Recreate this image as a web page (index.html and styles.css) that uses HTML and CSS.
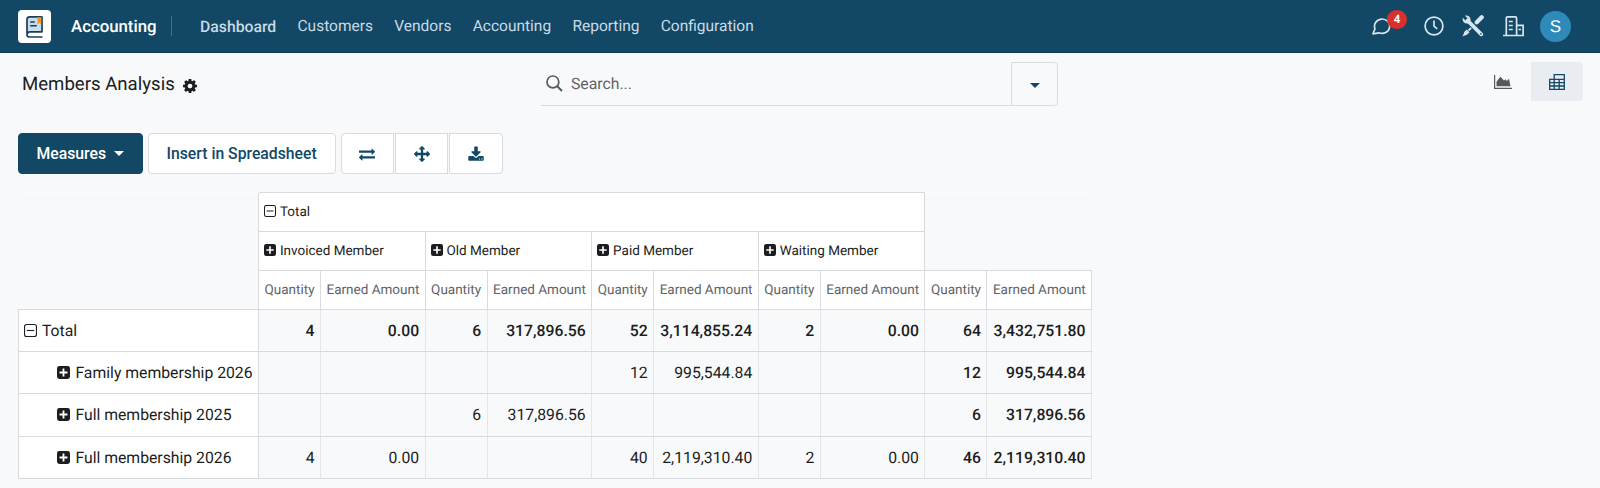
FILE: index.html
```
<!DOCTYPE html>
<html lang="en">
<head>
  <meta charset="UTF-8" />
  <meta name="viewport" content="width=device-width, initial-scale=1" />
  <title>Members Analysis</title>
  <link rel="stylesheet" href="styles.css">
</head>
<body>
  <!-- Shared icons -->
  <svg class="icon-defs" width="0" height="0">
    <symbol id="plus" viewBox="0 0 13 13">
      <rect width="13" height="13" rx="2.4" fill="#1b1d21"/>
      <path d="M6.5 2.5v8M2.5 6.5h8" stroke="#fff" stroke-width="1.8"/>
    </symbol>
    <symbol id="minus" viewBox="0 0 13 13">
      <rect x=".55" y=".55" width="11.9" height="11.9" rx="2" fill="none" stroke="#1b1d21" stroke-width="1.1"/>
      <path d="M2.8 6.5h7.4" stroke="#1b1d21" stroke-width="1.1"/>
    </symbol>
  </svg>

  <!-- Main navbar -->
  <nav class="navbar">
    <div class="app-logo">
      <svg width="17" height="22" viewBox="0 0 17 22">
        <path d="M3 1h13v15H1V3q0-2 2-2z" fill="#c9dcec"/>
        <path d="M16.500 .9H3.600Q1 .9 1 3.500V18.500q0 2.500 2.600 2.500H16.500M1.500 17.500q.5-1.600 2.500-1.600h12.500M16 1v15" fill="none" stroke="#183f5a" stroke-width="1.700"/>
        <path d="M4.200 6h4.600M4.200 9.800h6.600" stroke="#183f5a" stroke-width="1.500"/>
        <path d="M11.500 1.200h3.800v7.300l-1.900-1.700-1.900 1.700z" fill="#f09a1c"/>
      </svg>
    </div>
    <span class="brand">Accounting</span>
    <div class="nav-menu">
      <a class="current">Dashboard</a>
      <a>Customers</a>
      <a>Vendors</a>
      <a>Accounting</a>
      <a>Reporting</a>
      <a>Configuration</a>
    </div>
    <div class="systray">
      <div class="chat">
        <svg width="20" height="18" viewBox="0 0 20 18" fill="none" stroke="#d7e5ee" stroke-width="1.700" stroke-linejoin="round">
          <path d="M1 16.800 3 11.800A7.600 7.200 0 1 1 7 15.800z"/>
        </svg>
        <span class="badge">4</span>
      </div>
      <svg class="clock" width="20" height="20" viewBox="0 0 20 20" fill="none" stroke="#d7e5ee" stroke-width="1.700">
        <circle cx="10" cy="10" r="8.900"/>
        <path d="M10 4.500V10.200l3.200 2.700"/>
      </svg>
      <svg class="tools" width="22" height="22" viewBox="0 0 22 22" fill="#d7e5ee">
        <path d="M6.500 15.500 13 9" stroke="#d7e5ee" stroke-width="1.800"/>
        <path d="M14.800 7.200 19.700 2.300" stroke="#d7e5ee" stroke-width="4.200" stroke-linecap="round"/>
        <path d="M4.700 14.500 7.500 17.300 5.300 19.500.6 21.500 2.400 16.700z"/>
        <path d="M6 6 19.300 19.300" stroke="#124865" stroke-width="5.600"/>
        <path d="M5.500 5.500 19.300 19.300" stroke="#d7e5ee" stroke-width="3.800" stroke-linecap="round"/>
        <path d="M3 .7 5.600 3.300 5.200 5 3.500 5.400.8 2.800C-.1 6.500 2.800 9.300 6.500 8.200L8.500 6.200C9.300 2.800 6.500-.1 3 .7z"/>
        <circle cx="18.900" cy="18.900" r=".8" fill="#124865"/>
      </svg>
      <svg class="company" width="21" height="21" viewBox="0 0 21 21" fill="none" stroke="#d7e5ee" stroke-width="1.700">
        <path d="M0 19.500h20.100V9.300h-6.500M3.300 19.500V2.200q0-1.300 1.300-1.300h7.700q1.300 0 1.300 1.300V19.500M5.800 5.500h4M5.800 9.500h4M5.800 13.500h4M15.500 13.500h2.500"/>
      </svg>
      <span class="avatar">S</span>
    </div>
  </nav>

  <!-- Control panel -->
  <div class="control-panel">
    <div class="title">
      <span>Members Analysis</span>
      <svg class="cog" width="14" height="14" viewBox="0 128 1536 1536"><path fill="#1b1d21" d="M1024 896q0-106-75-181t-181-75-181 75-75 181 75 181 181 75 181-75 75-181zm512-109v222q0 12-8 23t-20 13l-185 28q-19 54-39 91 35 50 107 138 10 12 10 25t-9 23q-27 37-99 108t-94 71q-12 0-26-9l-138-108q-44 23-91 38-16 136-29 186-7 28-36 28h-222q-14 0-24.500-8.500t-11.500-21.500l-28-184q-49-16-90-37l-141 107q-10 9-25 9-14 0-25-11-126-114-165-168-7-10-7-23 0-12 8-23 15-21 51-66.500t54-70.500q-27-50-41-99l-183-27q-13-2-21-12.500t-8-23.500v-222q0-12 8-23t19-13l186-28q14-46 39-92-40-57-107-138-10-12-10-24 0-10 9-23 26-36 98.500-107.500t94.500-71.500q13 0 26 10l138 107q44-23 91-38 16-136 29-186 7-28 36-28h222q14 0 24.500 8.500t11.500 21.500l28 184q49 16 90 37l142-107q9-9 24-9 13 0 25 10 129 119 165 170 7 8 7 22 0 12-8 23-15 21-51 66.500t-54 70.500q26 50 41 98l183 28q13 2 21 12.500t8 23.500z"/></svg>
    </div>
    <div class="search">
      <div class="search-box">
        <svg width="17" height="17" viewBox="0 0 17 17" fill="none" stroke="#55595e" stroke-width="1.700">
          <circle cx="6.900" cy="6.900" r="5.900"/>
          <path d="M11 11l5 5" stroke-width="2"/>
        </svg>
        <span>Search...</span>
      </div>
      <button class="search-toggle"><i class="caret"></i></button>
    </div>
    <div class="view-switch">
      <button>
        <svg width="18" height="14" viewBox="0 0 18 14" fill="#55595e">
          <path d="M.6 0v13.300H18" fill="none" stroke="#55595e" stroke-width="1.200"/>
          <path d="M2.500 11.300V6.800L6.300 1.700 10 5.500l1.500-1.200 1.300 1.700 2.200-2.300 1.500 7.600z"/>
        </svg>
      </button>
      <button class="active">
        <svg width="16" height="16" viewBox="0 0 16 16" fill="none" stroke="#124865" stroke-width="1.300">
          <path d="M5.200 5.300V.7h10.100v14.600H.7V5.300h14.600M.7 8.700h14.600M.7 12h14.600M5.200 5.300v10M10.200 5.300v10"/>
        </svg>
      </button>
    </div>
  </div>

  <!-- Pivot buttons -->
  <div class="toolbar">
    <button class="btn btn-primary">Measures <i class="caret"></i></button>
    <button class="btn">Insert in Spreadsheet</button>
    <div class="btn-group">
      <button class="btn"><svg width="16" height="16" viewBox="0 0 1792 1792"><path d="M1792 1184v192q0 13-9.500 22.500t-22.500 9.500h-1376v192q0 13-9.500 22.500t-22.500 9.500q-12 0-24-10l-319-320q-9-9-9-22 0-14 9-23l320-320q9-9 23-9 13 0 22.500 9.500t9.500 22.500v192h1376q13 0 22.500 9.500t9.500 22.500zm0-544q0 14-9 23l-320 320q-9 9-23 9-13 0-22.500-9.500t-9.500-22.500v-192h-1376q-13 0-22.500-9.500t-9.500-22.500v-192q0-13 9.500-22.500t22.500-9.500h1376v-192q0-13 9.500-22.500t22.500-9.500q12 0 24 10l319 319q9 9 9 23z"/></svg></button>
      <button class="btn"><svg width="16" height="16" viewBox="0 0 1792 1792"><path d="M1792 896q0 26-19 45l-256 256q-19 19-45 19t-45-19-19-45v-128h-384v384h128q26 0 45 19t19 45-19 45l-256 256q-19 19-45 19t-45-19l-256-256q-19-19-19-45t19-45 45-19h128v-384h-384v128q0 26-19 45t-45 19-45-19l-256-256q-19-19-19-45t19-45l256-256q19-19 45-19t45 19 19 45v128h384v-384h-128q-26 0-45-19t-19-45 19-45l256-256q19-19 45-19t45 19l256 256q19 19 19 45t-19 45-45 19h-128v384h384v-128q0-26 19-45t45-19 45 19l256 256q19 19 19 45z"/></svg></button>
      <button class="btn"><svg width="16" height="16" viewBox="32 -60 1728 1728"><path d="M1344 1344q0-26-19-45t-45-19-45 19-19 45 19 45 45 19 45-19 19-45zm256 0q0-26-19-45t-45-19-45 19-19 45 19 45 45 19 45-19 19-45zm128-224v320q0 40-28 68t-68 28h-1472q-40 0-68-28t-28-68v-320q0-40 28-68t68-28h465l135 136q58 56 136 56t136-56l136-136h464q40 0 68 28t28 68zm-325-569q17 41-14 70l-448 448q-18 19-45 19t-45-19l-448-448q-31-29-14-70 17-39 59-39h256v-448q0-26 19-45t45-19h256q26 0 45 19t19 45v448h256q42 0 59 39z"/></svg></button>
    </div>
  </div>

  <!-- Pivot table -->
  <table class="pivot">
    <colgroup>
      <col class="col-label">
      <col class="col-qty"><col class="col-amount">
      <col class="col-qty"><col class="col-amount">
      <col class="col-qty"><col class="col-amount">
      <col class="col-qty"><col class="col-amount">
      <col class="col-qty"><col class="col-amount">
    </colgroup>
    <thead>
      <tr>
        <th class="blank" rowspan="3"></th>
        <th colspan="8"><svg><use href="#minus"/></svg>Total</th>
        <th class="blank" rowspan="2" colspan="2"></th>
      </tr>
      <tr>
        <th colspan="2"><svg><use href="#plus"/></svg>Invoiced Member</th>
        <th colspan="2"><svg><use href="#plus"/></svg>Old Member</th>
        <th colspan="2"><svg><use href="#plus"/></svg>Paid Member</th>
        <th colspan="2"><svg><use href="#plus"/></svg>Waiting Member</th>
      </tr>
      <tr class="measures">
        <th>Quantity</th><th>Earned Amount</th>
        <th>Quantity</th><th>Earned Amount</th>
        <th>Quantity</th><th>Earned Amount</th>
        <th>Quantity</th><th>Earned Amount</th>
        <th>Quantity</th><th>Earned Amount</th>
      </tr>
    </thead>
    <tbody>
      <tr class="total">
        <th><svg><use href="#minus"/></svg>Total</th>
        <td>4</td><td>0.00</td>
        <td>6</td><td>317,896.56</td>
        <td>52</td><td>3,114,855.24</td>
        <td>2</td><td>0.00</td>
        <td>64</td><td>3,432,751.80</td>
      </tr>
      <tr>
        <th class="child"><svg><use href="#plus"/></svg>Family membership 2026</th>
        <td></td><td></td>
        <td></td><td></td>
        <td>12</td><td>995,544.84</td>
        <td></td><td></td>
        <td class="sum">12</td><td class="sum">995,544.84</td>
      </tr>
      <tr>
        <th class="child"><svg><use href="#plus"/></svg>Full membership 2025</th>
        <td></td><td></td>
        <td>6</td><td>317,896.56</td>
        <td></td><td></td>
        <td></td><td></td>
        <td class="sum">6</td><td class="sum">317,896.56</td>
      </tr>
      <tr>
        <th class="child"><svg><use href="#plus"/></svg>Full membership 2026</th>
        <td>4</td><td>0.00</td>
        <td></td><td></td>
        <td>40</td><td>2,119,310.40</td>
        <td>2</td><td>0.00</td>
        <td class="sum">46</td><td class="sum">2,119,310.40</td>
      </tr>
    </tbody>
  </table>
</body>
</html>
```
FILE: styles.css
```
* {
  box-sizing: border-box;
  margin: 0;
  padding: 0;
}

body {
  height: 488px;
  font-family: Roboto, "Liberation Sans", sans-serif;
  font-size: 15.75px;
  color: #1b1d21;
  background-color: #f8f9fb;
  text-rendering: geometricPrecision;
  overflow: hidden;
}

svg {
  display: block;
  flex: none;
}

.icon-defs {
  position: absolute;
}

button {
  font: inherit;
  color: inherit;
  background: none;
  border: none;
}

.caret {
  display: inline-block;
  border-top: 5px solid currentColor;
  border-left: 5px solid transparent;
  border-right: 5px solid transparent;
}

/* Navbar */
.navbar {
  display: flex;
  align-items: center;
  height: 53px;
  padding: 0 29px 0 18px;
  background-color: #124865;
  border-bottom: 1px solid #0d3850;
  color: #c9dae5;
}

.app-logo {
  display: flex;
  align-items: center;
  justify-content: center;
  width: 33px;
  height: 33px;
  margin-top: 1px;
  background: white;
  border-radius: 4px;
}

.brand {
  width: 101px;
  height: 20px;
  margin-left: 20px;
  line-height: 22px;
  font-size: 16.8px;
  font-weight: 500;
  color: white;
  border-right: 1px solid #41708a;
}

.nav-menu {
  display: flex;
  gap: 21.3px;
  margin-left: 28px;
  font-size: 15.5px;
}

.nav-menu .current {
  font-size: 15.75px;
  font-weight: 500;
}

.systray {
  display: flex;
  align-items: center;
  margin-left: auto;
}

.chat {
  position: relative;
}

.badge {
  position: absolute;
  top: -7px;
  left: 15px;
  width: 20px;
  height: 19px;
  line-height: 19px;
  border-radius: 10px;
  background-color: #d9302c;
  color: white;
  font-size: 11.5px;
  font-weight: 700;
  text-align: center;
}

.clock {
  margin-left: 32px;
}

.tools {
  margin-left: 18px;
}

.company {
  margin-left: 19px;
}

.avatar {
  width: 31px;
  height: 31px;
  margin-left: 16px;
  line-height: 32px;
  border-radius: 50%;
  background-color: #2f8ab9;
  color: white;
  font-family: "Liberation Sans", sans-serif;
  font-size: 17px;
  text-align: center;
}

/* Control panel */
.control-panel {
  display: grid;
  grid-template-columns: 519px 517px 1fr;
  align-items: start;
  height: 80px;
  padding: 9px 17px 0 22px;
}

.title {
  display: flex;
  align-items: center;
  height: 43px;
  font-size: 18.6px;
}

.cog {
  margin: 4px 0 0 8px;
}

.search {
  display: flex;
  height: 44px;
}

.search-box {
  display: flex;
  flex: 1;
  align-items: center;
  gap: 8px;
  padding: 0 0 1px 5px;
  border-bottom: 1px solid #d8dadd;
  color: #5f6368;
}

.search-toggle {
  width: 47px;
  border: 1px solid #d8dadd;
  border-radius: 0 4px 4px 0;
  color: #124865;
}

.search-toggle .caret {
  vertical-align: middle;
}

.view-switch {
  display: flex;
  justify-content: flex-end;
}

.view-switch button {
  display: flex;
  align-items: center;
  justify-content: center;
  width: 57px;
  height: 39px;
}

.view-switch button.active {
  width: 52px;
  background-color: #e9ecf0;
  border-radius: 0 4px 4px 0;
}

/* Toolbar */
.toolbar {
  display: flex;
  gap: 5px;
  height: 41px;
  margin: 0 18px 18px;
}

.btn {
  display: flex;
  align-items: center;
  justify-content: center;
  padding: 0 18px;
  border: 1px solid #d8dadd;
  border-radius: 4px;
  background: white;
  color: #124865;
  fill: #124865;
  font-weight: 500;
  white-space: nowrap;
}

.btn-primary {
  gap: 8px;
  padding: 0 17.5px;
  background-color: #124865;
  border-color: #124865;
  color: white;
}

.btn-group {
  display: flex;
  gap: 1px;
}

.btn-group .btn {
  width: 53.3px;
  border-radius: 0;
}

.btn-group .btn:first-child {
  border-radius: 4px 0 0 4px;
}

.btn-group .btn:last-child {
  border-radius: 0 4px 4px 0;
}

/* Pivot */
.pivot {
  width: 1074px;
  margin-left: 18px;
  border-collapse: collapse;
  table-layout: fixed;
}

.col-label {
  width: 240px;
}

.col-qty {
  width: 62px;
}

.col-amount {
  width: 104.6px;
}

.pivot th,
.pivot td {
  padding: 0 5.5px;
  border: 1px solid #d8dadd;
  font-weight: 400;
  white-space: nowrap;
}

.pivot th {
  text-align: left;
  background: white;
}

.pivot td {
  text-align: right;
  border-color: #d8dadd #e4e6e9;
}

.pivot thead tr {
  height: 39px;
  font-size: 13.5px;
}

.pivot tbody tr {
  height: 42.2px;
}

.pivot .blank {
  background: none;
  border: none;
  border-top: 1px solid #fbfcfd;
}

.pivot .measures th {
  color: #5f6368;
}

.pivot svg {
  display: inline-block;
  width: 13px;
  height: 13px;
  margin: 0 5px 0 -.6px;
  vertical-align: -1px;
}

.pivot thead svg {
  width: 12px;
  height: 12px;
  margin-right: 4px;
}

.pivot .child {
  padding-left: 39px;
}

.pivot .total td,
.pivot .sum {
  font-weight: 500;
}
```
